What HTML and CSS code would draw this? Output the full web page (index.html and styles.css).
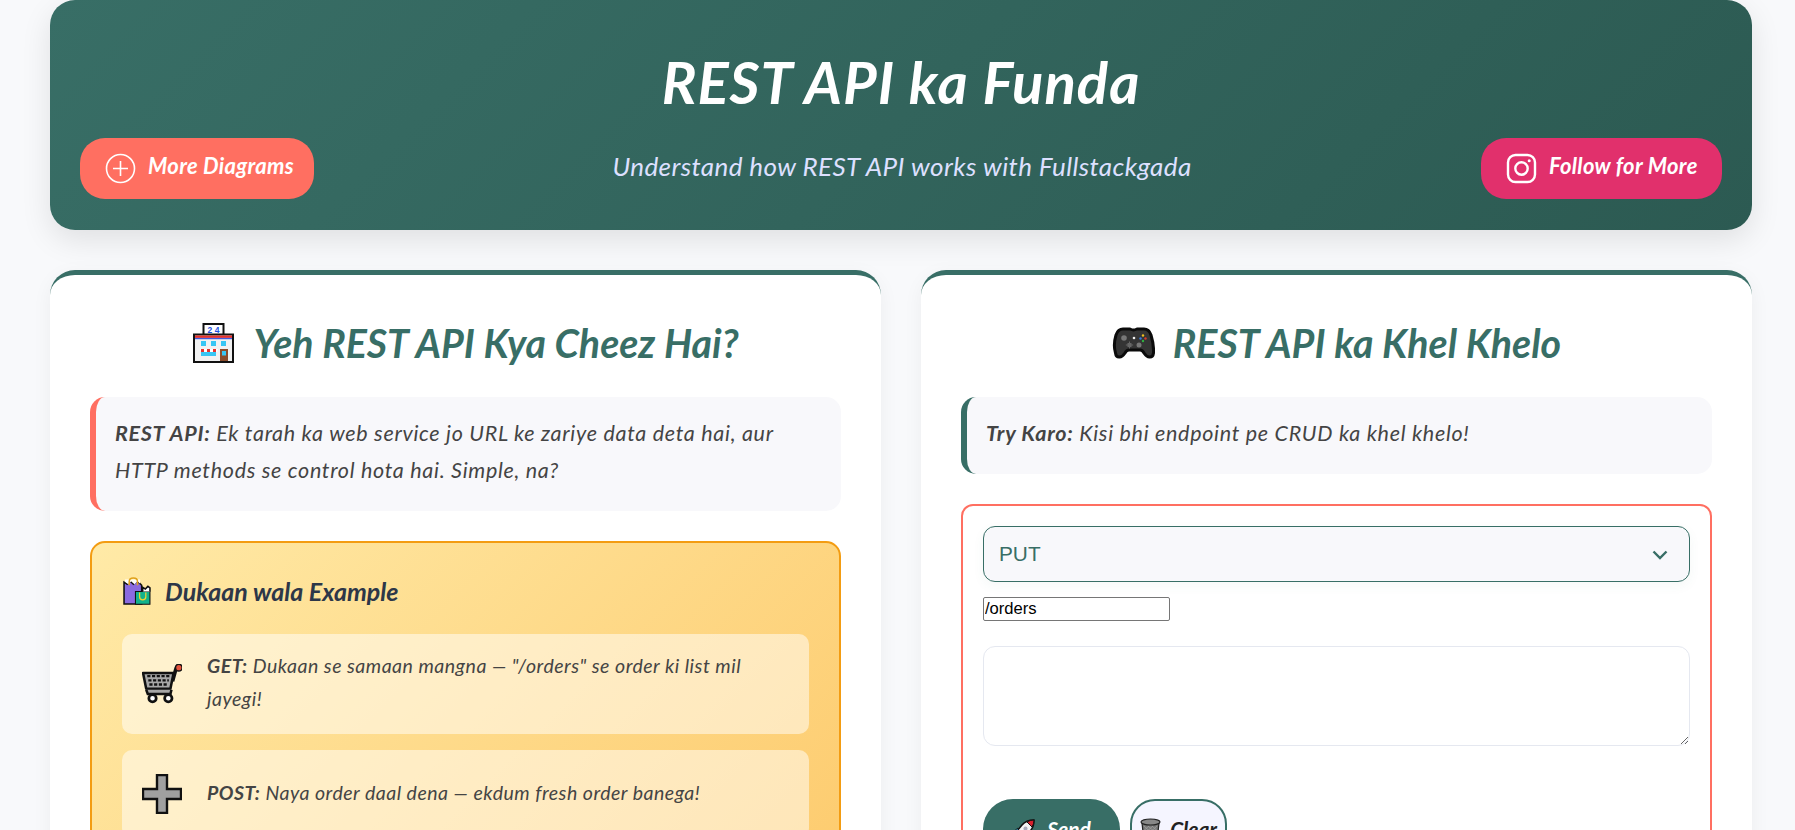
FILE: index.html
```html
<!DOCTYPE html>
<html lang="en">
<head>
<meta charset="utf-8">
<title>REST API ka Funda</title>
<link rel="stylesheet" href="styles.css">
</head>
<body>
<div class="page">
  <header class="hero">
    <h1 class="hero-title">REST API ka Funda</h1>
    <div class="hero-row">
      <a class="pill pill-coral" href="#">
        <svg class="pill-icon" viewBox="0 0 31 31" fill="none" stroke="#fff" stroke-width="1.6"><circle cx="15.5" cy="15.5" r="14"/><path d="M15.5 8v15M8 15.5h15"/></svg>
        <span>More Diagrams</span>
      </a>
      <p class="hero-sub">Understand how REST API works with Fullstackgada</p>
      <a class="pill pill-pink" href="#">
        <svg class="pill-icon" viewBox="0 0 31 31" fill="none" stroke="#fff" stroke-width="2.4"><rect x="2" y="2" width="27" height="27" rx="7.5"/><circle cx="15.5" cy="15.5" r="6.2"/><circle cx="23.2" cy="7.8" r="1.5" fill="#fff" stroke="none"/></svg>
        <span>Follow for More</span>
      </a>
    </div>
  </header>
  <main class="columns">
    <section class="card">
      <h2 class="card-title">
        <svg class="title-icon" viewBox="0 0 41 40">
          <rect x="10.5" y="1" width="20" height="12" fill="#fff" stroke="#111" stroke-width="2"/>
          <text x="20.5" y="10" text-anchor="middle" class="sign-text">2 4</text>
          <rect x="1" y="11.5" width="39" height="27.5" fill="#f1f1f1" stroke="#111" stroke-width="2"/>
          <rect x="2" y="12.5" width="37" height="2.4" fill="#e8322c"/>
          <rect x="2" y="14.9" width="37" height="1.3" fill="#3f5be0"/>
          <path d="M8 18h5v5H8zM18 18h5v5h-5zM28 18h5v5h-5zM8 29h15v4H8z" fill="#36c6f4"/>
          <path d="M7 26h18l-.8 3H7.800z" fill="#fff"/>
          <path d="M8 26h3v3H8zM14 26h3v3h-3zM20 26h3v3h-3z" fill="#e8322c"/>
          <rect x="27" y="26" width="8" height="12" fill="#8a4b2a"/>
          <rect x="29" y="28" width="4" height="4.500" fill="#36c6f4"/>
        </svg>
        <span>Yeh REST API Kya Cheez Hai?</span>
      </h2>
      <div class="note note-coral"><strong>REST API:</strong> Ek tarah ka web service jo URL ke zariye data deta hai, aur HTTP methods se control hota hai. Simple, na?</div>
      <div class="shop">
        <h3 class="shop-title">
          <svg class="bag-icon" viewBox="0 0 27 27">
            <path d="M1 26V5l3 2 3-3 3 3 3-3 3 2 2 2v18z" fill="#8a6ae0" stroke="#111" stroke-width="1.500"/>
            <path d="M2 4.500l3 2.500 3-3 3 3 3-3 2.500 2.500V2.500H2z" fill="#fff"/>
            <path d="M6 8V4.500Q6 1 10 1t4 3.500V8" fill="none" stroke="#e0a21c" stroke-width="1.500"/>
            <path d="M12 14h14v12.200H12z" fill="#12b28c" stroke="#111" stroke-width="1"/>
            <path d="M16 15v4q0 3 3 3t3-3v-4" fill="none" stroke="#f2d230" stroke-width="1.200"/>
            <path d="M19 14V10l2.500 1.500L24 9l2 1.500V14" fill="#fff" stroke="#111" stroke-width="1.500"/>
          </svg>
          <span>Dukaan wala Example</span>
        </h3>
        <div class="shop-row">
          <svg class="shop-icon" viewBox="1 2 38 37">
            <path d="M30 18 33 7q.7-2.500 3-3" fill="none" stroke="#111" stroke-width="3.500"/>
            <circle cx="36" cy="5" r="3.200" fill="#e4533d" stroke="#111" stroke-width="1.500"/>
            <path d="M2 10 31 10 28 25H5z" fill="#a6a6a6" stroke="#111" stroke-width="2.400" stroke-linejoin="round"/>
            <path d="M6 13h21M7 17h19.500M8 21h18" stroke="#111" stroke-width="2.200" stroke-dasharray="3 1.500"/>
            <path d="M5 26l1.500 4H28l1-4" fill="#a6a6a6" stroke="#111" stroke-width="2.400"/>
            <circle cx="11" cy="34" r="3.500" fill="#fff" stroke="#111" stroke-width="2.600"/>
            <circle cx="26" cy="34" r="3.500" fill="#fff" stroke="#111" stroke-width="2.600"/>
          </svg>
          <div class="shop-text"><strong>GET:</strong> Dukaan se samaan mangna — "/orders" se order ki list mil jayegi!</div>
        </div>
        <div class="shop-row">
          <svg class="shop-icon" viewBox="0 0 40 40"><path d="M15 1h10v14h14v10H25v14H15V25H1V15h14z" fill="#a0a0a0" stroke="#111" stroke-width="2.400"/></svg>
          <div class="shop-text"><strong>POST:</strong> Naya order daal dena — ekdum fresh order banega!</div>
        </div>
      </div>
    </section>
    <section class="card">
      <h2 class="card-title">
        <svg class="title-icon" viewBox="0 0 43 40">
          <path d="M11 6h7q2 1 3.500 1T25 6h7q5 0 7 6 3 10 2.500 18-.5 4-3.500 4-3 .5-6-4-1.500-3-4-3H17q-2.500 0-4 3-3 4.500-6 4-3 0-3.500-4Q1 22 4 12 6 6 11 6z" fill="#343434" stroke="#0b0b0b" stroke-width="3" stroke-linejoin="round"/>
          <circle cx="12" cy="15" r="2.800" fill="#777"/>
          <circle cx="22" cy="15" r="1.300" fill="#eee"/>
          <path d="M15.500 20h4v4h-4zM17 18.500h1v7h-1zM13.800 21.500h7.400v1h-7.400z" fill="#666"/>
          <circle cx="27" cy="22" r="2.500" fill="#777"/>
          <circle cx="31" cy="12.500" r="1.200" fill="#f0c020"/>
          <circle cx="28.500" cy="15.500" r="1.200" fill="#3478e0"/>
          <circle cx="33.500" cy="15.500" r="1.200" fill="#d83a2c"/>
          <circle cx="31" cy="18" r="1.200" fill="#30b040"/>
        </svg>
        <span>REST API ka Khel Khelo</span>
      </h2>
      <div class="note note-teal"><strong>Try Karo:</strong> Kisi bhi endpoint pe CRUD ka khel khelo!</div>
      <form class="play">
        <div class="select-wrap">
          <select class="method">
            <option>GET</option><option>POST</option><option selected>PUT</option><option>DELETE</option>
          </select>
          <svg class="chevron" viewBox="0 0 16 10" fill="none" stroke="#386e66" stroke-width="2.400"><path d="M1.500 1.500 8 8l6.500-6.500"/></svg>
        </div>
        <input class="endpoint" type="text" value="/orders">
        <textarea class="body-input"></textarea>
        <div class="actions">
          <button class="btn btn-send" type="button">
            <svg class="btn-icon" viewBox="0 0 23 23">
              <path d="M22 1q-8 0-12 5L5 12l6 6 6-5q5-4 5-12z" fill="#f4f4f4" stroke="#111" stroke-width="1.500"/>
              <path d="M22 1q-4 0-7 2l5 5q2-3 2-7z" fill="#d8202c" stroke="#111" stroke-width="1"/>
              <circle cx="13.500" cy="9.500" r="2" fill="#aab"/>
              <path d="M6 9 1 13l5 .5zM13 17l-3 5-1-4z" fill="#35b5f0" stroke="#111" stroke-width=".8"/>
            </svg>
            <span>Send</span>
          </button>
          <button class="btn btn-clear" type="button">
            <svg class="btn-icon-sm" viewBox="0 0 21 24">
              <path d="M2 5l2 18h13l2-18z" fill="#777" stroke="#222" stroke-width="1.200"/>
              <path d="M4 8l13 12M8 8l9 8M12 8l5 4.500M4 12l8 8M4 16l4 4M17 8 4 20M13 8l-9 8M9 8l-5 4.500M17 12l-9 8M17 16l-4 4" stroke="#a4a4a4" stroke-width=".7"/>
              <ellipse cx="10.500" cy="4" rx="9.500" ry="3" fill="#888" stroke="#222" stroke-width="1.200"/>
            </svg>
            <span>Clear</span>
          </button>
        </div>
      </form>
    </section>
  </main>
</div>
</body>
</html>
```

FILE: styles.css
```css
* { box-sizing: border-box; }
html, body { height: 100%; overflow: hidden; }
body {
  margin: 0;
  background: #f8f9fb;
  font-family: "Lato", "Liberation Sans", sans-serif;
  font-style: italic;
  color: #444;
}
.page { width: 1702px; margin-left: 50px; }

.hero {
  height: 230px;
  padding: 46px 30px 0;
  border-radius: 25px;
  background: linear-gradient(135deg, #386e66, #2c5a52);
  box-shadow: 0 10px 30px rgba(0, 0, 0, .1);
  color: #fff;
}
.hero-title {
  margin: 0 0 20px;
  text-align: center;
  font-size: 58px;
  line-height: 72px;
  font-weight: 700;
  letter-spacing: 1px;
}
.hero-row { display: flex; align-items: center; justify-content: space-between; }
.hero-sub { margin: 0 0 6px; padding-left: 9px; font-size: 26px; letter-spacing: .4px; color: #dde0ff; }
.pill {
  display: flex;
  align-items: center;
  gap: 12px;
  height: 61px;
  padding: 0 0 0 25px;
  border-radius: 25px;
  color: #fff;
  font-size: 22px;
  font-weight: 700;
  letter-spacing: .3px;
  text-decoration: none;
  white-space: nowrap;
}
.pill span { margin-bottom: 6px; }
.pill-coral { background: #ff6f61; width: 234px; }
.pill-pink { background: #e1306c; width: 241px; }
.pill-icon { width: 31px; height: 31px; flex: none; }

.columns { display: grid; grid-template-columns: 1fr 1fr; gap: 40px; margin-top: 40px; }
.card {
  padding: 38px 40px 40px;
  background: #fff;
  border-top: 5px solid #386e66;
  border-radius: 25px;
  box-shadow: 0 5px 20px rgba(0, 0, 0, .05);
}
.card-title {
  display: flex;
  align-items: center;
  justify-content: center;
  gap: 18px;
  margin: 0 0 24px;
  font-size: 39.3px;
  line-height: 60px;
  font-weight: 700;
  color: #386e66;
}
.title-icon { width: 43px; height: 40px; flex: none; }
.sign-text { font: normal 700 8.5px "Liberation Sans", sans-serif; fill: #1a4fe0; }
.note {
  padding: 18px 19px 22px;
  border-radius: 15px;
  background: #f8f8fb;
  font-size: 21.5px;
  letter-spacing: .7px;
  line-height: 37px;
}
.note-coral { border-left: 6px solid #ff6f61; }
.note-teal { border-left: 6px solid #386e66; }

.shop {
  margin-top: 30px;
  padding: 30px;
  border: 2px solid #f39c12;
  border-radius: 15px;
  background: linear-gradient(135deg, #ffeaa7, #fdcb6e);
}
.shop-title {
  display: flex;
  align-items: center;
  gap: 14px;
  margin: 0 0 25px;
  font-size: 25px;
  line-height: 36px;
  font-weight: 700;
  color: #2d3748;
}
.bag-icon { width: 28px; height: 28px; margin-left: 1px; flex: none; }
.shop-row {
  display: flex;
  align-items: center;
  gap: 25px;
  min-height: 88px;
  margin-bottom: 16px;
  padding: 15px 20px;
  border-radius: 10px;
  background: rgba(255, 255, 255, .5);
}
.shop-icon { flex: none; width: 40px; height: 40px; }
.shop-text { padding-bottom: 4px; font-size: 19.5px; letter-spacing: .5px; line-height: 33px; }

.play {
  margin-top: 30px;
  padding: 20px;
  border: 2px solid #ff6f61;
  border-radius: 12px;
}
.select-wrap { position: relative; }
.method {
  display: block;
  width: 100%;
  height: 56px;
  padding: 0 15px 2px;
  appearance: none;
  border: 1.500px solid #386e66;
  border-radius: 12px;
  background: #f8f8fb;
  color: #386e66;
  font: normal 20.8px "Liberation Sans", sans-serif;
  box-shadow: 0 4px 12px rgba(56, 110, 102, .05);
}
.chevron { position: absolute; right: 22px; top: 24px; width: 16px; height: 10px; pointer-events: none; }
.endpoint {
  display: block;
  width: 187px;
  height: 24px;
  margin-top: 15px;
  padding: 1px;
  border: 1px solid #767676;
  border-radius: 2px;
  background: #fff;
  color: #000;
  font: normal 16.6px "Liberation Sans", sans-serif;
}
.body-input {
  display: block;
  width: 100%;
  height: 100px;
  margin-top: 25px;
  border: 1px solid #e5e8f0;
  border-radius: 12px;
  background: #fff;
}
.actions { display: flex; gap: 10px; margin-top: 53px; }
.btn {
  display: flex;
  align-items: center;
  justify-content: center;
  height: 62px;
  border-radius: 25px;
  font: italic 700 21px "Lato", sans-serif;
}
.btn span { margin-bottom: 3px; }
.btn-send { gap: 12px; width: 137px; border: 0; border-radius: 30px; background: #386e66; color: #fff; }
.btn-clear { gap: 9px; width: 97px; padding: 0; border: 2px solid #386e66; background: #f5f5ff; color: #222; }
.btn-icon { width: 23px; height: 23px; flex: none; }
.btn-icon-sm { width: 21px; height: 24px; flex: none; }
```
